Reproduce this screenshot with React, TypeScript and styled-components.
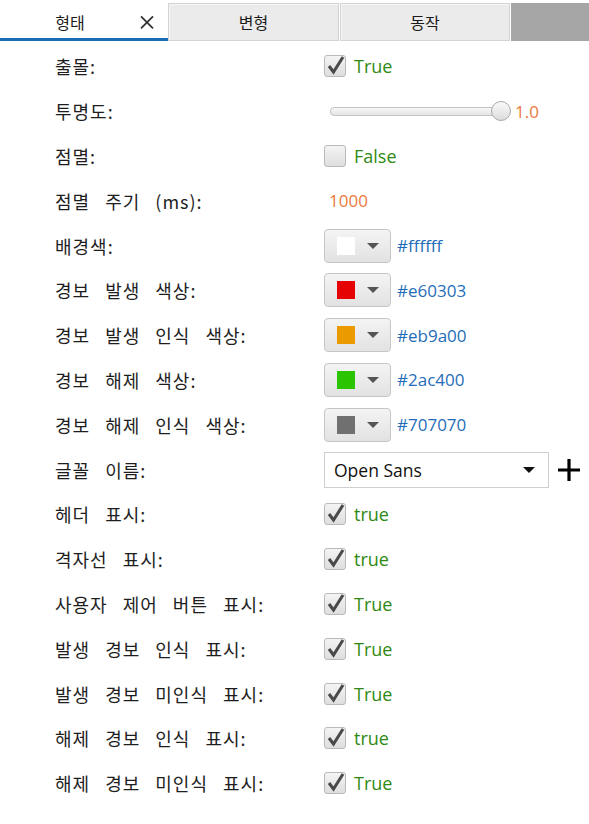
import styled, { createGlobalStyle } from "styled-components";

const GlobalStyle = createGlobalStyle`
  body {
    margin: 0;
    background: #ffffff;
    font-family: "Noto Sans CJK KR", "Noto Sans", sans-serif;
  }
`;

const colors = {
  label: "#1e1e1e",
  green: "#2f8a12",
  orange: "#ec7a3c",
  blue: "#1f6db8",
  tabBlue: "#1a6cb3",
};

const Page = styled.div`
  width: 589px;
  min-height: 824px;
  background: #fff;
`;

const TabBar = styled.div`
  display: flex;
  height: 41px;
  padding-top: 3px;
  box-sizing: border-box;
  align-items: stretch;
`;

const Tab = styled.div<{ $active?: boolean; $width: number }>`
  position: relative;
  display: flex;
  align-items: center;
  justify-content: center;
  width: ${(p) => p.$width}px;
  box-sizing: border-box;
  font-size: 16px;
  color: #1a1a1a;
  background: ${(p) => (p.$active ? "#fff" : "#ebebeb")};
  border: ${(p) => (p.$active ? "none" : "1px solid #d3d3d3")};
  border-bottom: ${(p) =>
    p.$active ? `3px solid ${colors.tabBlue}` : "1px solid #d3d3d3"};
  box-shadow: ${(p) => (p.$active ? "none" : "inset 1px 1px 0 #f6f6f6")};
  margin-right: ${(p) => (p.$active ? 0 : 1)}px;
  padding-top: ${(p) => (p.$active ? 3 : 0)}px;
  padding-right: ${(p) => (p.$active ? 28 : 0)}px;
`;

const CloseMark = styled.span`
  position: absolute;
  right: 14px;
  top: 50%;
  transform: translateY(-40%);
  display: flex;
`;

const TabFill = styled.div`
  flex: 1;
  background: #a6a6a6;
`;

const Rows = styled.div`
  padding-top: 3px;
`;

const Row = styled.div`
  display: grid;
  grid-template-columns: 324px 1fr;
  align-items: center;
  height: 44.8px;
`;

const Label = styled.div`
  padding-left: 55px;
  font-size: 18px;
  letter-spacing: 1px;
  word-spacing: 10px;
  color: ${colors.label};
`;

const Value = styled.div`
  display: flex;
  align-items: center;
  gap: 8px;
`;

const ValueText = styled.span<{ $color: string; $size?: number }>`
  font-family: "Open Sans", "Noto Sans", sans-serif;
  font-size: ${(p) => p.$size ?? 17}px;
  color: ${(p) => p.$color};
`;

const CheckBox = styled.span`
  position: relative;
  display: inline-block;
  width: 22px;
  height: 22px;
  box-sizing: border-box;
  border: 1px solid #b9b9b9;
  border-radius: 3px;
  background: linear-gradient(#f4f4f4, #dedede);

  svg {
    position: absolute;
    left: 1px;
    top: -2px;
  }
`;

const SliderWrap = styled.div`
  display: flex;
  align-items: center;
  padding-left: 6px;
`;

const Track = styled.div`
  position: relative;
  width: 170px;
  height: 7px;
  border: 1px solid #c4c4c4;
  border-radius: 4px;
  background: linear-gradient(#f7f7f7, #e4e4e4);
`;

const Thumb = styled.div`
  position: absolute;
  right: -10px;
  top: 50%;
  width: 20px;
  height: 20px;
  box-sizing: border-box;
  transform: translateY(-50%);
  border-radius: 50%;
  border: 1px solid #a9a9a9;
  background: linear-gradient(#fafafa, #dcdcdc);
`;

const SliderValue = styled(ValueText)`
  margin-left: 13px;
`;

const ColorButton = styled.div`
  display: flex;
  align-items: center;
  width: 67px;
  height: 34px;
  box-sizing: border-box;
  padding-left: 12px;
  gap: 12px;
  border: 1px solid #c6c6c6;
  border-radius: 4px;
  background: linear-gradient(#f4f4f4, #e2e2e2);
`;

const Swatch = styled.span<{ $color: string }>`
  width: 18px;
  height: 18px;
  background: ${(p) => p.$color};
`;

const Caret = styled.span<{ $color?: string }>`
  width: 0;
  height: 0;
  border-left: 6px solid transparent;
  border-right: 6px solid transparent;
  border-top: 6px solid ${(p) => p.$color ?? "#555"};
`;

const Select = styled.div`
  display: flex;
  align-items: center;
  justify-content: space-between;
  width: 225px;
  height: 36px;
  box-sizing: border-box;
  padding: 0 13px 0 9px;
  border: 1px solid #cfcfcf;
  background: #fff;
  font-family: "Open Sans", "Noto Sans", sans-serif;
  font-size: 17.5px;
  color: #111;
`;

const PlusButton = styled.span`
  display: inline-flex;
  margin-left: 1px;
`;

type RowData =
  | { label: string; kind: "check"; checked: boolean; text: string }
  | { label: string; kind: "slider"; text: string }
  | { label: string; kind: "number"; text: string }
  | { label: string; kind: "color"; color: string }
  | { label: string; kind: "font"; text: string };

const rows: RowData[] = [
  { label: "출몰:", kind: "check", checked: true, text: "True" },
  { label: "투명도:", kind: "slider", text: "1.0" },
  { label: "점멸:", kind: "check", checked: false, text: "False" },
  { label: "점멸 주기 (ms):", kind: "number", text: "1000" },
  { label: "배경색:", kind: "color", color: "#ffffff" },
  { label: "경보 발생 색상:", kind: "color", color: "#e60303" },
  { label: "경보 발생 인식 색상:", kind: "color", color: "#eb9a00" },
  { label: "경보 해제 색상:", kind: "color", color: "#2ac400" },
  { label: "경보 해제 인식 색상:", kind: "color", color: "#707070" },
  { label: "글꼴 이름:", kind: "font", text: "Open Sans" },
  { label: "헤더 표시:", kind: "check", checked: true, text: "true" },
  { label: "격자선 표시:", kind: "check", checked: true, text: "true" },
  { label: "사용자 제어 버튼 표시:", kind: "check", checked: true, text: "True" },
  { label: "발생 경보 인식 표시:", kind: "check", checked: true, text: "True" },
  { label: "발생 경보 미인식 표시:", kind: "check", checked: true, text: "True" },
  { label: "해제 경보 인식 표시:", kind: "check", checked: true, text: "true" },
  { label: "해제 경보 미인식 표시:", kind: "check", checked: true, text: "True" },
];

function Check({ checked }: { checked: boolean }) {
  return (
    <CheckBox>
      {checked && (
        <svg width="20" height="22" viewBox="0 0 20 22">
          <path
            d="M3 12 L7.5 18 L17 3"
            fill="none"
            stroke="#4a4a4a"
            strokeWidth="3"
          />
        </svg>
      )}
    </CheckBox>
  );
}

function renderValue(row: RowData) {
  switch (row.kind) {
    case "check":
      return (
        <Value>
          <Check checked={row.checked} />
          <ValueText $color={colors.green} $size={18}>
            {row.text}
          </ValueText>
        </Value>
      );
    case "slider":
      return (
        <SliderWrap>
          <Track>
            <Thumb />
          </Track>
          <SliderValue $color={colors.orange} $size={17}>
            {row.text}
          </SliderValue>
        </SliderWrap>
      );
    case "number":
      return (
        <Value style={{ paddingLeft: 5 }}>
          <ValueText $color={colors.orange} $size={17}>
            {row.text}
          </ValueText>
        </Value>
      );
    case "color":
      return (
        <Value style={{ gap: 6 }}>
          <ColorButton>
            <Swatch $color={row.color} />
            <Caret />
          </ColorButton>
          <ValueText $color={colors.blue} $size={17}>
            {row.color}
          </ValueText>
        </Value>
      );
    case "font":
      return (
        <Value style={{ gap: 6 }}>
          <Select>
            {row.text}
            <Caret $color="#111" />
          </Select>
          <PlusButton>
            <svg width="26" height="26" viewBox="0 0 26 26">
              <path d="M13 2 V24 M2 13 H24" stroke="#000" strokeWidth="3.2" />
            </svg>
          </PlusButton>
        </Value>
      );
  }
}

export default function App() {
  return (
    <Page>
      <GlobalStyle />
      <TabBar>
        <Tab $active $width={168}>
          형태
          <CloseMark>
            <svg width="14" height="14" viewBox="0 0 14 14">
              <path d="M1 1 L13 13 M13 1 L1 13" stroke="#333" strokeWidth="1.8" />
            </svg>
          </CloseMark>
        </Tab>
        <Tab $width={171}>변형</Tab>
        <Tab $width={170}>동작</Tab>
        <TabFill />
      </TabBar>
      <Rows>
        {rows.map((row) => (
          <Row key={row.label}>
            <Label>{row.label}</Label>
            {renderValue(row)}
          </Row>
        ))}
      </Rows>
    </Page>
  );
}
